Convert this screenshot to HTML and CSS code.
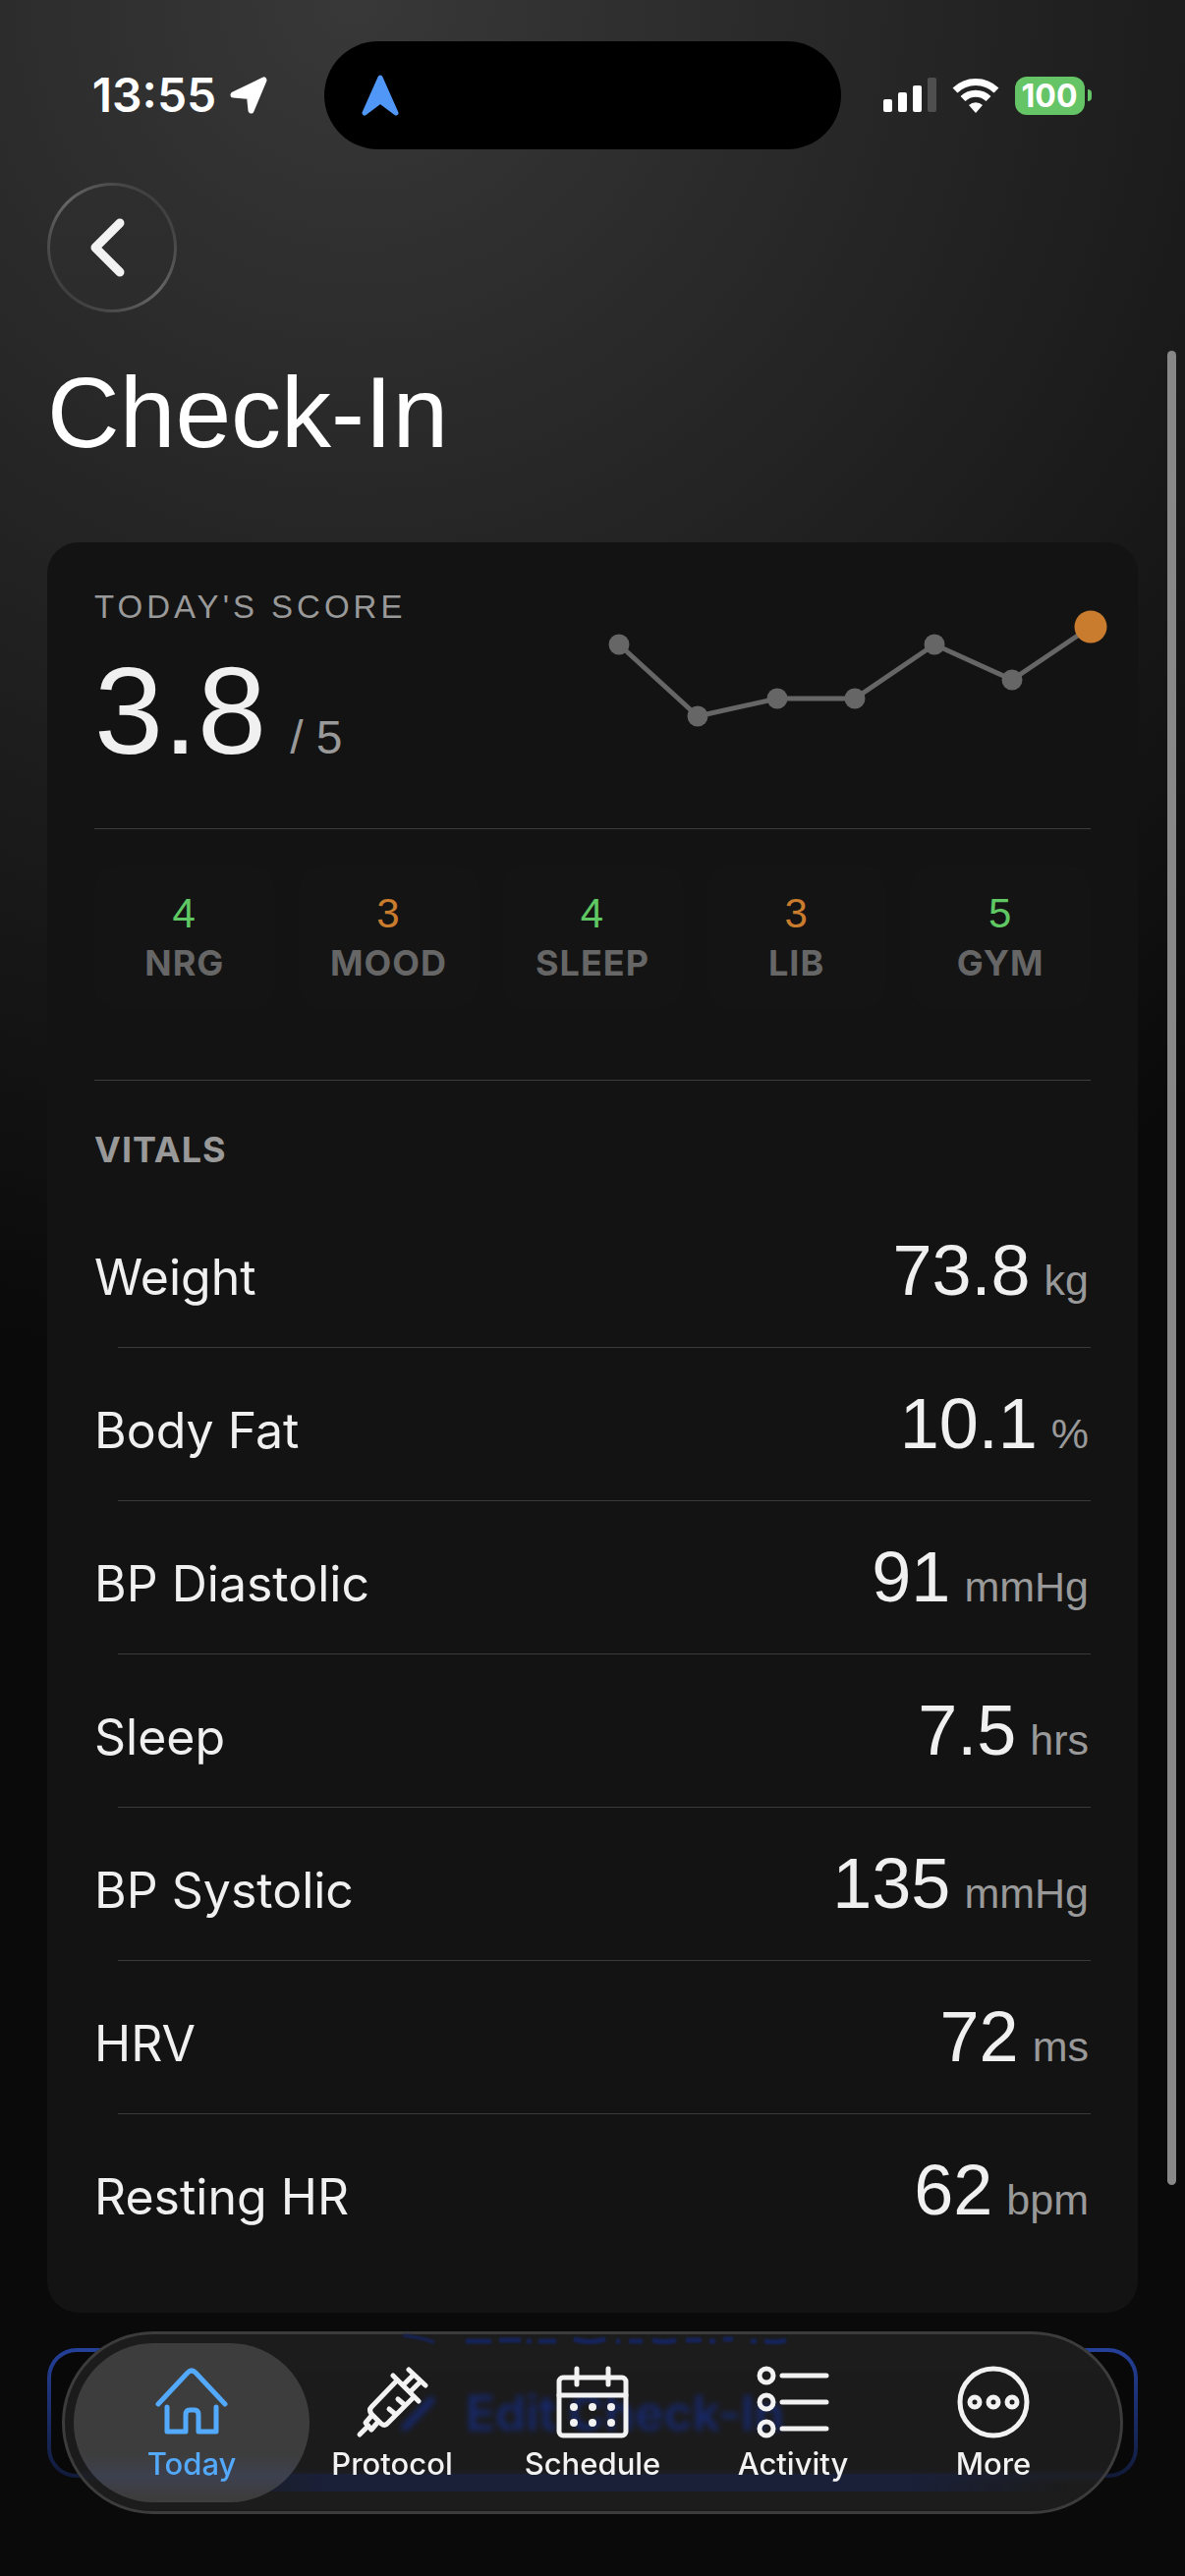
FILE: index.html
```
<!DOCTYPE html>
<html lang="en">
<head>
    <meta charset="UTF-8">
    <meta name="viewport" content="width=device-width, initial-scale=1.0">
    <title>Check-In</title>
    <link rel="stylesheet" href="styles.css">
</head>
<body>
    <div class="screen">
        <div class="status-bar">
            <div class="status-left">
                <span class="time">13:55</span>
                <svg class="location" viewBox="0 0 38 38"><path d="M34.5 3.5 L21.5 34.5 L20 20 L3.5 18.500 Z" fill="#fff" stroke="#fff" stroke-width="6" stroke-linejoin="round"/></svg>
            </div>
            <div class="island">
                <svg class="nav-arrow" viewBox="0 0 38 42"><path d="M19 3 L35 39 L19 27 L3 39 Z" fill="#5097f7" stroke="#5097f7" stroke-width="5" stroke-linejoin="round"/></svg>
            </div>
            <div class="status-right">
                <svg class="signal" viewBox="0 0 54 36">
                    <rect x="0" y="22" width="9" height="13" rx="2" fill="#fff"/>
                    <rect x="15" y="15" width="9" height="20" rx="2" fill="#fff"/>
                    <rect x="30" y="8" width="9" height="27" rx="2" fill="#fff"/>
                    <rect x="45" y="0" width="9" height="35" rx="2" fill="#4f4f4f"/>
                </svg>
                <svg class="wifi" viewBox="0 0 48 36">
                    <path d="M3 13 A30 30 0 0 1 45 13" fill="none" stroke="#fff" stroke-width="7"/>
                    <path d="M11 21.500 A18.500 18.500 0 0 1 37 21.500" fill="none" stroke="#fff" stroke-width="7"/>
                    <path d="M24 36 L17 28 A10 10 0 0 1 31 28 Z" fill="#fff"/>
                </svg>
                <div class="battery"><span>100</span></div>
            </div>
        </div>

        <main class="content">
            <button class="back" aria-label="Back">
                <svg viewBox="0 0 40 64"><path d="M33 7 L8 32 L33 57" fill="none" stroke="#f2f2f2" stroke-width="9" stroke-linecap="round" stroke-linejoin="round"/></svg>
            </button>
            <h1>Check-In</h1>

            <section class="card">
                <div class="score">
                    <div class="score-text">
                        <h2 class="score-label">TODAY'S SCORE</h2>
                        <div class="score-value">3.8 <span>/ 5</span></div>
                    </div>
                    <svg class="chart" viewBox="0 0 520 130">
                        <polyline points="20,40 100,113 181,95 260,95 341,40 420,76 500,22" fill="none" stroke="#666" stroke-width="5"/>
                        <g fill="#666">
                            <circle cx="20" cy="40" r="10.500"/>
                            <circle cx="100" cy="113" r="10.500"/>
                            <circle cx="181" cy="95" r="10.500"/>
                            <circle cx="260" cy="95" r="10.500"/>
                            <circle cx="341" cy="40" r="10.500"/>
                            <circle cx="420" cy="76" r="10.500"/>
                        </g>
                        <circle cx="500" cy="22" r="16.500" fill="#c97c2d"/>
                    </svg>
                </div>

                <ul class="ratings">
                    <li><b class="good">4</b>NRG</li>
                    <li><b class="fair">3</b>MOOD</li>
                    <li><b class="good">4</b>SLEEP</li>
                    <li><b class="fair">3</b>LIB</li>
                    <li><b class="good">5</b>GYM</li>
                </ul>

                <h2 class="vitals-title">VITALS</h2>
                <dl class="vitals">
                    <div class="row"><dt>Weight</dt><dd>73.8<span>kg</span></dd></div>
                    <div class="row"><dt>Body Fat</dt><dd>10.1<span>%</span></dd></div>
                    <div class="row"><dt>BP Diastolic</dt><dd>91<span>mmHg</span></dd></div>
                    <div class="row"><dt>Sleep</dt><dd>7.5<span>hrs</span></dd></div>
                    <div class="row"><dt>BP Systolic</dt><dd>135<span>mmHg</span></dd></div>
                    <div class="row"><dt>HRV</dt><dd>72<span>ms</span></dd></div>
                    <div class="row"><dt>Resting HR</dt><dd>62<span>bpm</span></dd></div>
                </dl>
            </section>

            <button class="edit">
                <svg viewBox="0 0 36 36"><path d="M4 33 L31 5" stroke="#0022a8" stroke-width="7" stroke-linecap="round"/></svg>
                Edit Check-In
            </button>
        </main>

        <div class="scrollbar"></div>

        <nav class="tab-bar">
            <svg class="reflection" viewBox="0 0 400 12" fill="none" stroke="#16245c">
                <path d="M2 1 Q20 3 34 8" stroke-width="3"/>
                <path d="M66 7 H92 M100 6 H122 M128 7 H133 M140 7 H158" stroke-width="5"/>
                <path d="M176 5 Q192 10 208 5 M219 7 H223 M232 7 H246 M256 6 Q268 9 280 6 M290 6 H306 M314 7 H320 M328 5 H338 M356 7 H362 M370 7 Q382 9 392 6" stroke-width="5"/>
            </svg>
            <a class="tab active" href="#today">
                <svg viewBox="0 0 74 74">
                    <path d="M3 39 L33 7 Q37 3 41 7 L71 39"/>
                    <path d="M12 42 V67 H31 V50 Q31 45 35 45 H40 Q44 45 44 50 V67 H62 V42"/>
                </svg>
                Today
            </a>
            <a class="tab" href="#protocol">
                <svg viewBox="0 0 74 74">
                    <path d="M54 4 L71 20 M38 10 L64 36 M59 9 L50 18 M66 16 L57 25"/>
                    <path d="M42 15 L16 42 Q13 45 16 49 L26 59 Q30 62 33 58 L59 32"/>
                    <path d="M16 51 L10 58 L16 65 L22 58 M13 61 L4 70 M43 34 L50 40 M34 44 L40 49"/>
                </svg>
                Protocol
            </a>
            <a class="tab" href="#schedule">
                <svg viewBox="0 0 74 74">
                    <rect x="3" y="12" width="68" height="59" rx="4"/>
                    <path d="M3 30 H71 M21 3 V19 M53 3 V19"/>
                    <g fill="#f2f2f2" stroke="none">
                        <circle cx="18" cy="42" r="4"/><circle cx="37" cy="42" r="4"/><circle cx="56" cy="42" r="4"/>
                        <circle cx="18" cy="58" r="4"/><circle cx="37" cy="58" r="4"/><circle cx="56" cy="58" r="4"/>
                    </g>
                </svg>
                Schedule
            </a>
            <a class="tab" href="#activity">
                <svg viewBox="0 0 74 74">
                    <circle cx="10" cy="10" r="7"/><circle cx="10" cy="37" r="7"/><circle cx="10" cy="64" r="7"/>
                    <path d="M26 10 H71 M26 37 H71 M26 64 H71"/>
                </svg>
                Activity
            </a>
            <a class="tab" href="#more">
                <svg viewBox="0 0 74 74">
                    <circle cx="37" cy="37" r="34"/>
                    <circle cx="18" cy="37" r="5"/><circle cx="37" cy="37" r="5"/><circle cx="56" cy="37" r="5"/>
                </svg>
                More
            </a>
        </nav>
    </div>
</body>
</html>
```
FILE: styles.css
```
* {
    box-sizing: border-box;
}
body {
    margin: 0;
    background-color: #0a0a0a;
    color: #f0f0f0;
    font-family: Inter, sans-serif;
}
.screen {
    position: relative;
    min-height: 100vh;
    overflow: hidden;
    background: radial-gradient(circle 1400px at 30% 0, #383838, #0a0a0a);
}

/* status bar */
.status-bar {
    display: grid;
    grid-template-columns: 330fr 526px 350fr;
    align-items: center;
    padding-top: 42px;
}
.status-left, .status-right {
    display: flex;
    align-items: center;
    justify-content: center;
    gap: 16px;
}
.status-left {
    padding-left: 36px;
    gap: 14px;
}
.status-right {
    padding-right: 60px;
}
.time {
    font-size: 48px;
    line-height: 60px;
    font-weight: 600;
    color: #fff;
}
.location {
    width: 38px;
    height: 38px;
}
.island {
    display: flex;
    align-items: center;
    height: 110px;
    padding-left: 38px;
    border-radius: 55px;
    background-color: #000;
}
.nav-arrow {
    width: 38px;
    height: 42px;
}
.signal {
    width: 54px;
    height: 36px;
    flex: none;
}
.wifi {
    width: 48px;
    height: 36px;
    flex: none;
}
.battery {
    position: relative;
    flex: none;
    width: 71px;
    height: 39px;
    border-radius: 12px;
    background-color: #65c466;
    color: #fff;
    font-size: 32px;
    line-height: 39px;
    font-weight: 700;
    text-align: center;
}
.battery::after {
    content: "";
    position: absolute;
    right: -7px;
    top: 13px;
    width: 4px;
    height: 12px;
    border-radius: 0 4px 4px 0;
    background-color: #65c466;
}

/* page */
.content {
    padding: 34px 48px 99px;
}
.back {
    display: flex;
    align-items: center;
    justify-content: center;
    width: 132px;
    height: 132px;
    padding: 0 10px 0 0;
    border: 3px solid transparent;
    border-radius: 50%;
    background: linear-gradient(#2e2e2e, #2c2c2c) padding-box, linear-gradient(45deg, #3a3a3a 10%, #666 50%, #3a3a3a 90%) border-box;
    cursor: pointer;
}
.back svg {
    width: 40px;
    height: 64px;
}
h1 {
    margin: 42px 0 72px;
    font-family: "Liberation Sans", Arial, sans-serif;
    font-size: 102px;
    line-height: 120px;
    font-weight: 400;
    color: #fff;
}
.card {
    padding: 48px;
    border-radius: 32px;
    background-color: #131313;
}

/* score */
.score {
    display: flex;
    justify-content: space-between;
    padding-bottom: 20px;
    border-bottom: 1px solid #3e3e3e;
}
.score-label {
    margin: 0;
    font-family: "Liberation Sans", Arial, sans-serif;
    font-size: 33px;
    line-height: 36px;
    font-weight: 400;
    letter-spacing: 4px;
    color: #999;
}
.score-value {
    display: flex;
    align-items: baseline;
    gap: 24px;
    margin-top: 16px;
    font-family: "Liberation Sans", Arial, sans-serif;
    font-size: 126px;
    line-height: 144px;
}
.score-value span {
    font-size: 48px;
    color: #999;
}
.chart {
    width: 520px;
    height: 130px;
    margin: 16px -20px 0 0;
}

/* ratings */
.ratings {
    display: grid;
    grid-template-columns: repeat(5, 1fr);
    gap: 24px;
    margin: 0;
    padding: 36px 0 72px;
    list-style: none;
    border-bottom: 1px solid #3e3e3e;
}
.ratings li {
    display: flex;
    flex-direction: column;
    align-items: center;
    height: 147px;
    padding-top: 24px;
    border-radius: 24px;
    background-color: #141414;
    color: #666;
    font-size: 36px;
    line-height: 48px;
    font-weight: 700;
    letter-spacing: 1px;
}
.ratings b {
    font-family: "Liberation Sans", Arial, sans-serif;
    font-size: 42px;
    line-height: 52px;
    font-weight: 400;
}
.ratings .good {
    color: #5fc763;
}
.ratings .fair {
    color: #c97c2d;
}

/* vitals */
.vitals-title {
    margin: 48px 0 0;
    color: #999;
    font-size: 36px;
    line-height: 44px;
    font-weight: 700;
    letter-spacing: 1px;
}
.vitals {
    margin: 24px 0 0;
}
.row {
    display: flex;
    justify-content: space-between;
    align-items: baseline;
    height: 156px;
    padding-top: 35px;
    line-height: 84px;
    background: linear-gradient(#3a3a3a, #3a3a3a) 24px 100% / 100% 1px no-repeat;
}
.row:last-child {
    height: 154px;
    background: none;
}
.row dt {
    font-size: 50px;
}
.row dd {
    display: flex;
    align-items: baseline;
    gap: 14px;
    margin: 0;
    font-family: "Liberation Sans", Arial, sans-serif;
    font-size: 72px;
}
.row dd span {
    padding-right: 2px;
    font-size: 43px;
    color: #999;
}

.edit {
    display: flex;
    align-items: center;
    justify-content: center;
    gap: 30px;
    width: 100%;
    height: 132px;
    margin-top: 36px;
    border: 4px solid transparent;
    border-radius: 30px;
    background: linear-gradient(#080808, #080808) padding-box, linear-gradient(#24409a, #111a38) border-box;
    color: #0022a8;
    font-family: Inter, sans-serif;
    font-size: 50px;
    font-weight: 600;
}
.edit svg {
    width: 36px;
    height: 36px;
}
.scrollbar {
    position: absolute;
    top: 357px;
    right: 9px;
    bottom: 398px;
    width: 9px;
    border-radius: 5px;
    background-color: #888;
}

/* tab bar */
.tab-bar {
    position: absolute;
    left: 63px;
    right: 63px;
    bottom: 63px;
    display: grid;
    grid-template-columns: repeat(5, 1fr);
    height: 186px;
    padding: 9px 27px;
    border: 3px solid #3c3c3c;
    border-radius: 93px;
    background:
        linear-gradient(90deg, transparent 10%, #1a2038 25%, #1a2038 80%, transparent 95%) 0 142px / 100% 18px no-repeat,
        linear-gradient(#1c1c1c 36px, rgba(46, 46, 46, 0.5) 50px);
    backdrop-filter: blur(3px);
}
/* glow of the button behind the glass, along the top edge */
.reflection {
    position: absolute;
    top: 0;
    left: 342px;
    width: 400px;
    height: 12px;
    filter: blur(1px);
}
.tab {
    display: flex;
    flex-direction: column;
    align-items: center;
    gap: 2px;
    padding-top: 23px;
    border-radius: 81px;
    color: #f2f2f2;
    font-size: 31px;
    line-height: 48px;
    font-weight: 500;
    text-decoration: none;
}
.tab svg {
    width: 74px;
    height: 74px;
    fill: none;
    stroke: currentColor;
    stroke-width: 5px;
    stroke-linecap: round;
    stroke-linejoin: round;
}
.tab.active {
    margin: 0 -18px;
    background: linear-gradient(#3d3d3d 70%, #3d414f 84%, #3d3d3d 96%);
    color: #53a9fb;
}
```
